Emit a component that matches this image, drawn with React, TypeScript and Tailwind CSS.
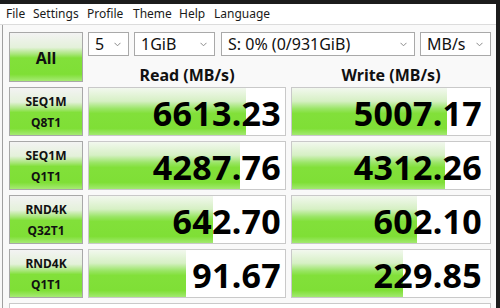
import React from "react";

const FONT = { fontFamily: '"Noto Sans", "Open Sans", "DejaVu Sans", sans-serif' };

const rows = [
  { l1: "SEQ1M", l2: "Q8T1", r: 6613.23, w: 5007.17 },
  { l1: "SEQ1M", l2: "Q1T1", r: 4287.76, w: 4312.26 },
  { l1: "RND4K", l2: "Q32T1", r: 642.7, w: 602.1 },
  { l1: "RND4K", l2: "Q1T1", r: 91.67, w: 229.85 },
];

const greenBtn =
  "bg-[linear-gradient(to_bottom,#f3f3f3_0%,#e4f1da_30%,#a8e67a_44%,#82e03a_52%,#7fdf36_86%,#a6ea74_100%)]";
const barGrad =
  "bg-[linear-gradient(to_bottom,#f2f8ee_0%,#d6f0c4_28%,#9ae566_44%,#82e03a_54%,#7fdf36_86%,#a2e970_100%)]";

function Chevron() {
  return (
    <svg width="7" height="5" viewBox="0 0 7 5" className="shrink-0">
      <polyline points="0.5,0.8 3.5,3.8 6.5,0.8" fill="none" stroke="#8a8a8a" strokeWidth="1" />
    </svg>
  );
}

function Combo({ text, w }: { text: string; w: string }) {
  return (
    <div
      className={`${w} h-[24px] bg-white border border-[#a9a9a9] flex items-center justify-between pl-[6px] pr-[7px] text-[16px] leading-[22px] text-[#111]`}
    >
      <span>{text}</span>
      <Chevron />
    </div>
  );
}

function ratio(v: number) {
  return Math.min(1, Math.log10(v * 10) / 6);
}

function Cell({ v, pr }: { v: number; pr: string }) {
  return (
    <div className="relative h-[49px] bg-white border border-[#c9c9c9]">
      <div
        className={`absolute left-0 top-0 bottom-0 ${barGrad}`}
        style={{ width: `${ratio(v) * 100}%` }}
      />
      <div
        className={`relative h-full text-right ${pr} pt-[3px] text-[34px] leading-[45px] font-bold tracking-[0.3px] text-black`}
      >
        {v.toFixed(2)}
      </div>
    </div>
  );
}

export default function App() {
  const menu: [string, string][] = [
    ["File", "w-[27px]"],
    ["Settings", "w-[54px]"],
    ["Profile", "w-[46px]"],
    ["Theme", "w-[46px]"],
    ["Help", "w-[35px]"],
    ["Language", "w-[60px]"],
  ];
  return (
    <div className="w-[500px] h-[308px] overflow-hidden bg-[#1c1c1c] pt-[4px] pr-[4px]" style={FONT}>
      <div className="h-[304px] bg-[#f9f9f9] flex flex-col">
        <div className="h-[21px] bg-white border-b border-[#dcdcdc] flex items-center pl-[6px] text-[12px] leading-[20px] text-[#1a1a1a]">
          {menu.map(([m, w]) => (
            <span key={m} className={w}>
              {m}
            </span>
          ))}
        </div>
        <div className="flex-1 ml-[2px] border-l border-[#a0a0a0] pl-[6px] pt-[7px]">
          <div className="grid grid-cols-[74px_198px_200px] gap-x-[5px] gap-y-[5px]">
            <div
              className={`h-[50px] border border-[#a8a8a8] ${greenBtn} flex items-center justify-center text-[16px] font-bold text-[#111] pt-[2px]`}
            >
              All
            </div>
            <div className="col-span-2 h-[50px] flex flex-col">
              <div className="flex h-[24px]">
                <Combo text="5" w="w-[41px]" />
                <div className="w-[5px]" />
                <Combo text="1GiB" w="w-[81px]" />
                <div className="w-[6px]" />
                <Combo text="S: 0% (0/931GiB)" w="w-[194px]" />
                <div className="w-[5px]" />
                <Combo text="MB/s" w="w-[71px]" />
              </div>
              <div className="grid grid-cols-[198px_200px] gap-x-[5px] h-[26px] items-end">
                <div className="text-center text-[16px] font-bold leading-[14px] text-[#111]">Read (MB/s)</div>
                <div className="text-center text-[16px] font-bold leading-[14px] text-[#111]">Write (MB/s)</div>
              </div>
            </div>
            {rows.map((r, i) => (
              <React.Fragment key={i}>
                <div
                  className={`h-[49px] border border-[#a8a8a8] ${greenBtn} flex flex-col items-center justify-center text-[12px] font-bold leading-[21px] text-[#111]`}
                >
                  <span>{r.l1}</span>
                  <span>{r.l2}</span>
                </div>
                <Cell v={r.r} pr="pr-[4px]" />
                <Cell v={r.w} pr="pr-[8px]" />
              </React.Fragment>
            ))}
            <div className="col-span-3 h-[20px] bg-white border border-[#c9c9c9]" />
          </div>
        </div>
      </div>
    </div>
  );
}
